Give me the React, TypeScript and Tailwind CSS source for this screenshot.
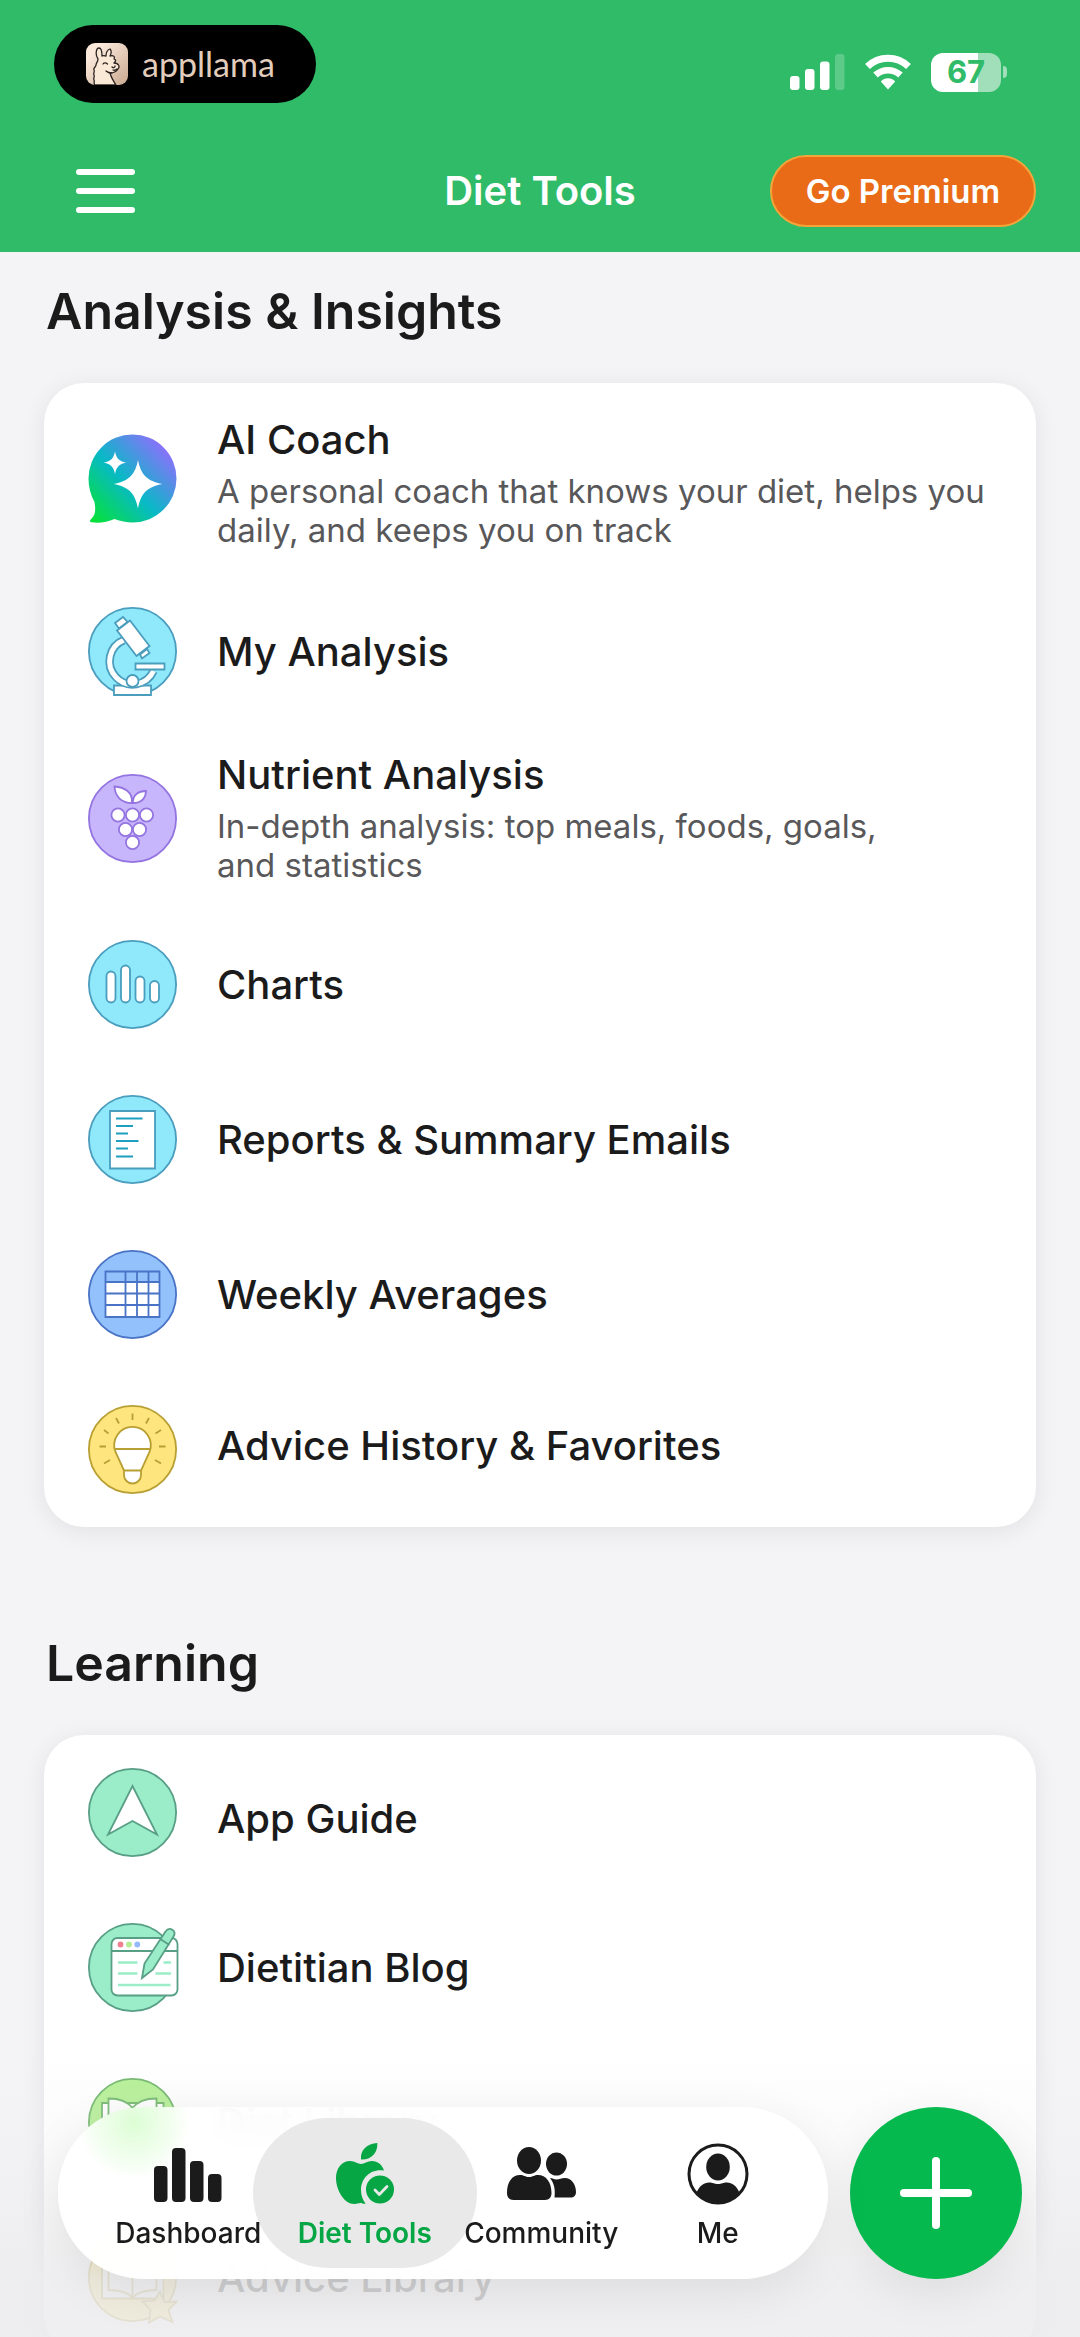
// src/App.tsx
import { useState } from 'react'
import type { ReactNode } from 'react'

interface Tool {
  title: string
  description?: string
  icon: ReactNode
  rowClass: string
  textClass?: string
}

interface Tab {
  label: string
  icon: ReactNode
}

/* ---------- Tool icons ---------- */

function Badge({ fill, stroke, children }: { fill: string; stroke: string; children: ReactNode }) {
  return (
    <svg viewBox="0 0 89 89" className="w-[89px] h-[89px] shrink-0 overflow-visible" aria-hidden="true">
      <circle cx="44.5" cy="44.5" r="43.6" fill={fill} stroke={stroke} strokeWidth="1.8" />
      <g fill="#fff" stroke={stroke} strokeWidth="1.8">{children}</g>
    </svg>
  )
}

function CoachIcon() {
  return (
    <svg viewBox="0 0 89 89" className="w-[89px] h-[89px] shrink-0" aria-hidden="true">
      <defs>
        <linearGradient id="coach" x1="0.05" y1="0.95" x2="0.88" y2="0.15">
          <stop offset="0" stopColor="#05e03c" />
          <stop offset="0.48" stopColor="#08b9c6" />
          <stop offset="1" stopColor="#8b70fb" />
        </linearGradient>
      </defs>
      <path fill="url(#coach)" d="M44.5.5a44 44 0 0 1 0 88c-6 0-12-1.2-18-3.5C20 88 11 89.3 4 88.3c-2.5-.4-2.6-1.8-.6-3.5C7.6 81 7.8 75 6.5 68 2.5 61 .5 53 .5 44.5a44 44 0 0 1 44-44Z" />
      <path fill="#fff" d="M50 26c3 15 9 21 24.5 24C59 53 53 59 50 74.5 47 59 41 53 25.5 50 41 47 47 41 50 26Z" />
      <path fill="#fff" d="M27 17.5c1.5 7 4 9.6 11 11.3-7 1.5-9.5 4-11 11.2-1.5-7.2-4-9.7-11.2-11.2 7.2-1.7 9.7-4.3 11.2-11.3Z" />
    </svg>
  )
}

function MicroscopeIcon() {
  return (
    <Badge fill="#8fe9fb" stroke="#4a9dbd">
      <path d="M26 78.5h37V88H26z" />
      <path d="M36 33a23 23 0 1 0 29.5 31" fill="none" strokeWidth="8.5" />
      <path d="M36 33a23 23 0 1 0 29.5 31" fill="none" stroke="#fff" strokeWidth="5" />
      <path d="M47.5 56.5h29v6h-29z" />
      <path d="M27 16l8-6 4.5 5-8.5 6.5zM52 47.5l7-5.5 2.5 4-7.5 5.5z" />
      <path d="M42 13.5 61.5 39l-13 10L29 23.5z" />
      <circle cx="44.5" cy="74" r="6" />
    </Badge>
  )
}

function GrapesIcon() {
  const grapes = [[30, 41], [44.5, 41], [58.5, 41], [37.5, 55.5], [51.5, 55.5], [44.5, 68.5]]
  return (
    <Badge fill="#c8b6fc" stroke="#9374e0">
      <path d="M26.5 12.5C36 13 45 18 44 29 33 29 27 22 26.5 12.5ZM58 17c-7.5 0-13.5 4-13 12 8 0 12.5-4.5 13-12Z" />
      {grapes.map(([x, y]) => <circle key={`${x}-${y}`} cx={x} cy={y} r="6.6" />)}
    </Badge>
  )
}

function ChartsIcon() {
  return (
    <Badge fill="#8fe9fb" stroke="#4a9dbd">
      <rect x="18.5" y="31.5" width="9" height="31" rx="4.5" />
      <rect x="33" y="25.5" width="9" height="37" rx="4.5" />
      <rect x="47.5" y="36.5" width="9" height="26" rx="4.5" />
      <rect x="62" y="41" width="9" height="21.5" rx="4.5" />
    </Badge>
  )
}

function ReportIcon() {
  return (
    <Badge fill="#8fe9fb" stroke="#4a9dbd">
      <path d="M22 16h45v57.5H22z" />
      <path stroke="#1f9fc0" d="M28 23.5h26.5M28 31h17M28 38.5h12M28 46h22.5M28 53.5h12M28 61.5h17" />
    </Badge>
  )
}

function TableIcon() {
  return (
    <Badge fill="#93c1fc" stroke="#4973c5">
      <path stroke="none" d="M17.5 32h54v35h-54z" />
      <path fill="none" d="M17.5 21.5h54V67h-54zM17.5 32h54M17.5 43.5h54M17.5 55h54M37.5 21.5V67M49 21.5V67M60.5 21.5V67" />
    </Badge>
  )
}

function BulbIcon() {
  return (
    <Badge fill="#ffe57d" stroke="#b89f33">
      <path d="M36 65.5 27.5 47a18.3 18.3 0 1 1 34 0L53 65.5V70a8.5 8.5 0 0 1-17 0z" />
      <path fill="none" d="M27 44h35M36 65.5h17" />
      <path fill="none" d="M44.5 8.5V15M28 13l3 5.5M61 13l-3 5.5M16 25l4.5 3.5M73 25l-5.5 3.5M11.5 41.5H18M71 41.5h6.5M16 58.5l6-3.5M73 58.5 67 55" />
    </Badge>
  )
}

function GuideIcon() {
  return (
    <Badge fill="#9aedc8" stroke="#589f86">
      <path d="M44.5 18 69 66.5 44.5 53 20 66.5Z" />
    </Badge>
  )
}

function BlogIcon() {
  return (
    <Badge fill="#9aedc8" stroke="#589f86">
      <rect x="23.5" y="15" width="66" height="57.5" rx="6" />
      <path fill="none" d="M23.5 28h66" />
      <g stroke="none">
        <circle cx="32.5" cy="21.5" r="2.9" fill="#f08091" />
        <circle cx="41" cy="21.5" r="2.9" fill="#b3ec92" />
        <circle cx="49.3" cy="21.5" r="2.9" fill="#93b9fb" />
      </g>
      <path fill="none" stroke="#9aedc8" strokeWidth="2.5" d="M30 39.5h19.5M75.5 39.5H83M30 50.5h19.5M67.5 50.5H83M30 62h52.5" />
      <path fill="#9aedc8" d="M54 55 56.5 40.5 77.5 8.5c4-5.5 11.5-1 8 5L65 46.5ZM73 16.5l8.5 5.5" />
    </Badge>
  )
}

function LibraryIcon({ fill, stroke, star }: { fill: string; stroke: string; star?: boolean }) {
  return (
    <Badge fill={fill} stroke={stroke}>
      <path d="M14 25h61.5v40.5H14z" />
      <path d="M20.5 20.5c9 0 18 1.5 24 9.5 6-8 15-9.5 24-9.5V57c-9 0-18 1-24 7.5-6-6.5-15-7.5-24-7.5ZM44.5 30v34" />
      {star && <path fill={fill} d="m72 58.5 4.5 10.5 12-.5-8 8.5 4 12-12.5-5.5-11 6 1.5-12.5-8-8.5 12-1Z" />}
    </Badge>
  )
}

const ANALYSIS_TOOLS: Tool[] = [
  {
    title: 'AI Coach',
    description: 'A personal coach that knows your diet, helps you\ndaily, and keeps you on track',
    icon: <CoachIcon />,
    rowClass: 'min-h-[191px]',
    textClass: 'pt-2',
  },
  { title: 'My Analysis', icon: <MicroscopeIcon />, rowClass: 'min-h-[155px]' },
  {
    title: 'Nutrient Analysis',
    description: 'In-depth analysis: top meals, foods, goals,\nand statistics',
    icon: <GrapesIcon />,
    rowClass: 'min-h-[178px]',
  },
  { title: 'Charts', icon: <ChartsIcon />, rowClass: 'min-h-[155px]' },
  { title: 'Reports & Summary Emails', icon: <ReportIcon />, rowClass: 'min-h-[155px]' },
  { title: 'Weekly Averages', icon: <TableIcon />, rowClass: 'min-h-[155px]' },
  { title: 'Advice History & Favorites', icon: <BulbIcon />, rowClass: 'min-h-[155px]', textClass: 'pb-2' },
]

const LEARNING_TOOLS: Tool[] = [
  { title: 'App Guide', icon: <GuideIcon />, rowClass: 'min-h-[155px]', textClass: 'pt-3' },
  { title: 'Dietitian Blog', icon: <BlogIcon />, rowClass: 'min-h-[155px]' },
  { title: 'Diet Library', icon: <LibraryIcon fill="#b4f094" stroke="#6fb56a" />, rowClass: 'min-h-[155px]' },
  { title: 'Advice Library', icon: <LibraryIcon fill="#ffe57d" stroke="#b89f33" star />, rowClass: 'min-h-[155px]' },
]

/* ---------- Tab bar icons ---------- */

const TABS: Tab[] = [
  {
    label: 'Dashboard',
    icon: (
      <svg viewBox="0 0 68 62" className="w-[68px] h-[62px]" fill="currentColor" aria-hidden="true">
        <rect x="0" y="23" width="13.5" height="36" rx="4" />
        <rect x="18" y="5" width="13.5" height="54" rx="4" />
        <rect x="36" y="18" width="13.5" height="41" rx="4" />
        <rect x="54" y="31" width="13.5" height="28" rx="4" />
      </svg>
    ),
  },
  {
    label: 'Diet Tools',
    icon: (
      <svg viewBox="0 0 58 62" className="w-[58px] h-[62px]" fill="currentColor" aria-hidden="true">
        <path d="M25 16.5C24 7 31 .5 41.3 0 42 9 36 17 25 16.5Z" />
        <path d="M14 18c5 0 7.5 3 11 3s6-3 11-3c5.5 0 10 3.5 12 9.5-14-2-23 8-23 19.5 0 5.5 1.5 9.5 4.5 13.5-2 .8-3-.5-5-.5s-3.5 1-6 1C8 61 0 47 0 35 0 25 6 18 14 18Z" />
        <circle cx="44" cy="46.5" r="14" />
        <path d="m39 47 4.3 4.5 7.7-8" fill="none" stroke="#e9e9e9" strokeWidth="2.8" strokeLinecap="round" strokeLinejoin="round" />
      </svg>
    ),
  },
  {
    label: 'Community',
    icon: (
      <svg viewBox="0 0 70 62" className="w-[70px] h-[62px]" fill="currentColor" aria-hidden="true">
        <ellipse cx="23" cy="17.5" rx="12" ry="13.5" />
        <path d="M1 50c0-11 5-18 13-18 4 0 5 2 9 2s5-2 9-2c8 0 13.5 7 13.5 18 0 4-2 7-6.5 7H7.5C3 57 1 54 1 50Z" />
        <ellipse cx="50.5" cy="21" rx="10.5" ry="11.5" />
        <path d="M44 35c3 0 3.5 1.5 6.5 1.5S55 35 59 35c6 0 11 6 11 14 0 3.5-2 5.5-5.5 5.5h-16C49.5 46 48 40 44 35Z" />
      </svg>
    ),
  },
  {
    label: 'Me',
    icon: (
      <svg viewBox="0 0 62 62" className="w-[62px] h-[62px]" fill="currentColor" aria-hidden="true">
        <circle cx="31" cy="31" r="29" fill="none" stroke="currentColor" strokeWidth="3" />
        <ellipse cx="31" cy="24" rx="11.8" ry="13.5" />
        <path d="M9.5 50C12 43 17 39.5 22 39.5c4 0 5 1.5 9 1.5s5-1.5 9-1.5c5 0 10 3.5 12.5 10.5C47 57.5 39.5 61 31 61S15 57.5 9.5 50Z" />
      </svg>
    ),
  },
]

/* ---------- Header pieces ---------- */

function BrandPill() {
  return (
    <div className="flex items-center gap-[14px] w-[262px] h-[78px] pl-8 rounded-full bg-black">
      <svg viewBox="0 0 42 42" className="w-[42px] h-[42px] shrink-0" aria-hidden="true">
        <defs>
          <linearGradient id="llama" x1="0" y1="0" x2="1" y2="1">
            <stop offset="0.2" stopColor="#fbe9dc" />
            <stop offset="1" stopColor="#c9a88e" />
          </linearGradient>
        </defs>
        <rect width="42" height="42" rx="9" fill="url(#llama)" />
        <path
          fill="#fbe9d8"
          stroke="#2c2320"
          strokeWidth="1.3"
          strokeLinejoin="round"
          d="M9 42c-2-2 0-3-1-5s1-3 0-5 1-3 0-5 2-3 2-5 2-3 2-6c-3-4-2-11 1-11 3 0 3 5 3 8 2-1 3 0 4 0 0-3 1-6 4-7 2 2 1 5 0 7 4-1 5 1 4 3 3 1 1 3 0 4 5 0 6 4 4 6-2 3-4 4-8 4 1 4 4 9 6 12Z"
        />
        <path fill="none" stroke="#2c2320" strokeWidth="1.3" strokeLinecap="round" d="M17 21c1-1.5 3-1.5 4.5 0M26 24c1 1 3 1 3-1M27 27c1.5.5 3 0 4-1M20 28c2 2 4 2 6 2" />
      </svg>
      <span className="font-[Lato] text-[34px] leading-9 text-[#e2cdbd]">appllama</span>
    </div>
  )
}

function StatusIcons() {
  return (
    <div className="flex items-center gap-5 pt-4">
      <svg viewBox="0 0 55 36" className="w-[55px] h-9" fill="#fff" aria-hidden="true">
        <rect x="0" y="22" width="9.5" height="14" rx="3" />
        <rect x="15" y="15" width="9.5" height="21" rx="3" />
        <rect x="30" y="7.5" width="9.5" height="28.5" rx="3" />
        <rect x="45" y="0" width="9.5" height="36" rx="3" opacity="0.22" />
      </svg>
      <svg viewBox="0 0 46 36" className="w-[46px] h-9" fill="none" stroke="#fff" aria-hidden="true">
        <path strokeWidth="7" d="M2.5 12.5a29.5 29.5 0 0 1 41 0" />
        <path strokeWidth="6.5" d="M10.5 21a18.5 18.5 0 0 1 25 0" />
        <path fill="#fff" stroke="none" d="M15.8 27.5c4-4.2 10.4-4.2 14.4 0L23 35.5Z" />
      </svg>
      <div className="flex items-center gap-[2px]">
        <div className="flex items-center justify-center w-[70px] h-[39px] rounded-xl bg-linear-to-r from-white from-67% to-[#a0dfb9] to-67% font-bold text-[31px] leading-9 text-[#2fbb67]">
          67
        </div>
        <div className="w-1 h-3 rounded-r-full bg-[#a0dfb9]" />
      </div>
    </div>
  )
}

function ToolSection({ title, tools }: { title: string; tools: Tool[] }) {
  return (
    <section>
      <h2 className="px-[2px] pb-10 text-[50px] leading-16 font-semibold">{title}</h2>
      <ul className="rounded-[40px] bg-white shadow-[0_4px_24px_rgba(0,0,0,0.08)]">
        {tools.map((tool) => (
          <li key={tool.title}>
            <a href="#" className={`flex items-center gap-10 pl-11 pr-10 ${tool.rowClass}`}>
              {tool.icon}
              <span className={`flex flex-col gap-2 ${tool.textClass ?? ''}`}>
                <span className="text-[40px] leading-12 font-medium">{tool.title}</span>
                {tool.description && (
                  <span className="text-[33px] leading-[39px] text-[#58585a] whitespace-pre-line">{tool.description}</span>
                )}
              </span>
            </a>
          </li>
        ))}
      </ul>
    </section>
  )
}

export default function App() {
  const [activeTab, setActiveTab] = useState('Diet Tools')

  return (
    <div className="relative flex flex-col h-screen overflow-hidden bg-[#f4f3f6] text-[#1b1b1c] font-[Inter,sans-serif]">
      <header className="shrink-0 pt-[25px] pb-[25px] bg-[#2fbb67] text-white">
        <div className="flex items-center justify-between pl-[54px] pr-[73px]">
          <BrandPill />
          <StatusIcons />
        </div>
        <div className="grid grid-cols-[1fr_auto_1fr] items-center mt-13 px-11">
          <button aria-label="Menu" className="flex flex-col gap-[13px] justify-self-start ml-8">
            <span className="w-[59px] h-[6px] rounded-full bg-white" />
            <span className="w-[59px] h-[6px] rounded-full bg-white" />
            <span className="w-[59px] h-[6px] rounded-full bg-white" />
          </button>
          <h1 className="text-[40px] leading-12 font-semibold">Diet Tools</h1>
          <button className="justify-self-end w-[266px] h-[72px] rounded-full border-2 border-[#f3a53a] bg-[#e96a17] text-[33px] leading-10 font-semibold">
            Go Premium
          </button>
        </div>
      </header>

      <main className="flex flex-col flex-1 min-h-0 gap-26 px-11 pt-[27px] overflow-hidden">
        <ToolSection title="Analysis & Insights" tools={ANALYSIS_TOOLS} />
        <ToolSection title="Learning" tools={LEARNING_TOOLS} />
      </main>

      {/* Fade behind the tab bar */}
      <div className="absolute inset-x-0 bottom-0 h-72 pointer-events-none bg-linear-to-b from-[#ececee]/0 via-[#ececee]/35 to-[#ececee]/85 to-80%" />

      <div className="absolute inset-x-0 bottom-0 flex items-center gap-[22px] px-[58px] pb-[58px]">
        <nav className="flex flex-1 h-[172px] pl-[42px] pr-[22px] rounded-full bg-white/96 bg-[radial-gradient(circle_at_76px_16px,#dcfdd4,transparent_56px)] backdrop-blur-[14px] shadow-[0_12px_48px_rgba(0,0,0,0.08)]">
          {TABS.map((tab) => {
            const active = tab.label === activeTab
            return (
              <button
                key={tab.label}
                aria-current={active ? 'page' : undefined}
                onClick={() => setActiveTab(tab.label)}
                className={`relative flex flex-1 flex-col items-center justify-center gap-[10px] pt-2 text-[28px] leading-9 ${active ? 'text-[#05a643] font-semibold' : 'font-medium'}`}
              >
                {active && <span className="absolute -inset-x-6 inset-y-[11px] -z-10 rounded-full bg-[#e9e9e9]" />}
                {tab.icon}
                {tab.label}
              </button>
            )
          })}
        </nav>
        <button aria-label="Add" className="flex items-center justify-center w-[172px] h-[172px] rounded-full bg-[#06b94e] shadow-[0_12px_48px_rgba(0,0,0,0.08)]">
          <svg viewBox="0 0 72 72" className="w-[72px] h-[72px]" fill="none" stroke="#fff" strokeWidth="8" strokeLinecap="round" aria-hidden="true">
            <path d="M36 4v64M4 36h64" />
          </svg>
        </button>
      </div>
    </div>
  )
}
